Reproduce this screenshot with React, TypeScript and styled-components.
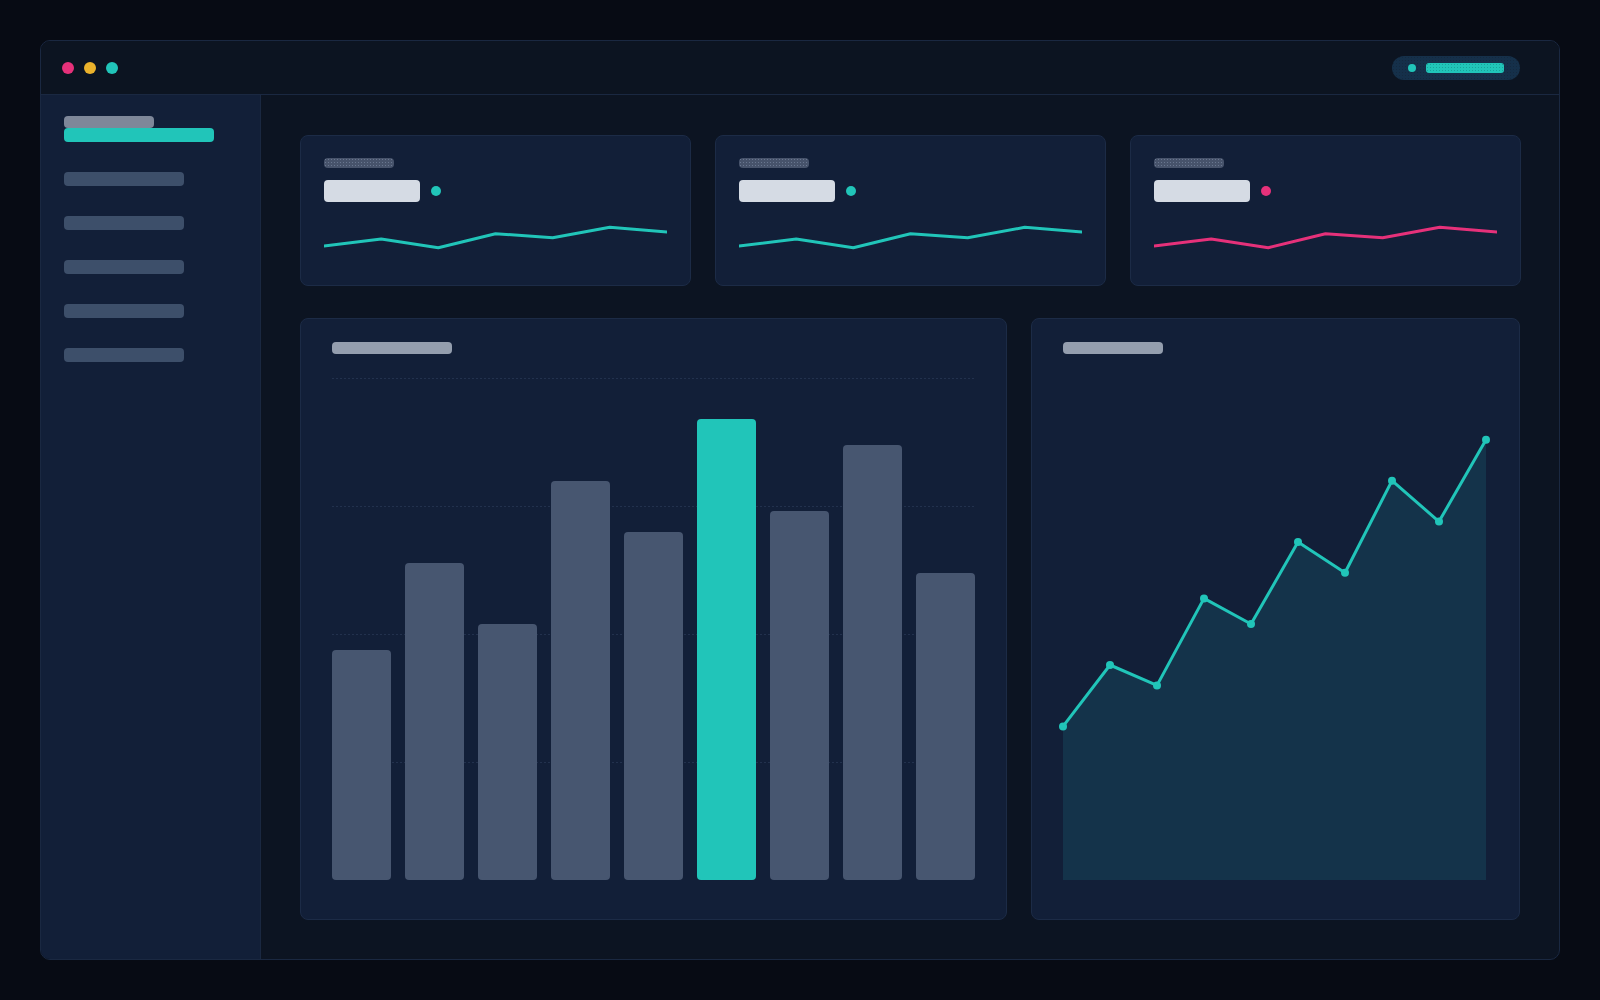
import styled, { createGlobalStyle, css } from "styled-components";

const GlobalStyle = createGlobalStyle`
  html, body {
    margin: 0;
    padding: 0;
    background: #070b14;
    font-family: "Inter", "Liberation Sans", sans-serif;
  }
  * {
    box-sizing: border-box;
  }
`;

const teal = "#21c5b9";
const pink = "#e6317a";
const yellow = "#ebb22c";

// faint speckle used by the placeholder pills
const speckle = (dot: string) => css`
  background-image: radial-gradient(${dot} 0.6px, transparent 0.8px);
  background-size: 3px 3px;
`;

const sparkPoints = [32, 25, 33.7, 19.7, 23.7, 13.3, 18];
const bars = [45, 62, 50, 78, 68, 90, 72, 85, 60];
const highlightBar = 5;
const trend = [30, 42, 38, 55, 50, 66, 60, 78, 70, 86];

const stats = [
  { line: teal, dot: teal },
  { line: teal, dot: teal },
  { line: pink, dot: pink },
];

export default function App() {
  const sparkPath = sparkPoints
    .map((y, i) => `${((i * 343) / 6).toFixed(1)},${y}`)
    .join(" ");

  const plotW = 424;
  const plotH = 512;
  const trendPts = trend.map((v, i) => [i * 47, plotH * (1 - v / 100)]);
  const trendLine = trendPts.map(([x, y]) => `${x},${y.toFixed(1)}`).join(" ");
  const trendArea = `0,${plotH} ${trendLine} ${trendPts[trendPts.length - 1][0]},${plotH}`;

  return (
    <>
      <GlobalStyle />
      <Page>
        <Window>
          <TitleBar>
            <Lights>
              <Light $color={pink} />
              <Light $color={yellow} />
              <Light $color={teal} />
            </Lights>
            <StatusPill>
              <StatusDot />
              <StatusBar />
            </StatusPill>
          </TitleBar>

          <Body>
            <Sidebar>
              <Brand>
                <BrandLabel />
                <BrandActive />
              </Brand>
              <NavList>
                {[0, 1, 2, 3, 4].map((i) => (
                  <NavItem key={i} />
                ))}
              </NavList>
            </Sidebar>

            <Main>
              <StatsRow>
                {stats.map((s, i) => (
                  <StatCard key={i}>
                    <StatLabel />
                    <ValueRow>
                      <ValueBox />
                      <TrendDot $color={s.dot} />
                    </ValueRow>
                    <svg width="343" height="40" viewBox="0 0 343 40">
                      <polyline
                        points={sparkPath}
                        fill="none"
                        stroke={s.line}
                        strokeWidth="3"
                        strokeLinejoin="round"
                        strokeLinecap="round"
                      />
                    </svg>
                  </StatCard>
                ))}
              </StatsRow>

              <ChartsRow>
                <ChartCard>
                  <ChartTitle $width={120} />
                  <Plot>
                    {[10, 138, 266, 394].map((top) => (
                      <GridLine key={top} style={{ top }} />
                    ))}
                    <Bars>
                      {bars.map((h, i) => (
                        <Bar
                          key={i}
                          $active={i === highlightBar}
                          style={{ height: `${h}%` }}
                        />
                      ))}
                    </Bars>
                  </Plot>
                </ChartCard>

                <ChartCard>
                  <ChartTitle $width={100} />
                  <Plot>
                    <svg
                      width={plotW}
                      height={plotH}
                      viewBox={`0 0 ${plotW} ${plotH}`}
                      style={{ overflow: "visible", display: "block" }}
                    >
                      <polygon points={trendArea} fill="#14334a" />
                      <polyline
                        points={trendLine}
                        fill="none"
                        stroke={teal}
                        strokeWidth="3"
                        strokeLinejoin="round"
                      />
                      {trendPts.map(([x, y], i) => (
                        <circle key={i} cx={x} cy={y} r="4" fill={teal} />
                      ))}
                    </svg>
                  </Plot>
                </ChartCard>
              </ChartsRow>
            </Main>
          </Body>
        </Window>
      </Page>
    </>
  );
}

const Page = styled.div`
  width: 1600px;
  height: 1000px;
  padding: 40px;
`;

const Window = styled.div`
  width: 1520px;
  height: 920px;
  display: flex;
  flex-direction: column;
  background: #0c1422;
  border: 1px solid #1a2841;
  border-radius: 10px;
  overflow: hidden;
`;

const TitleBar = styled.div`
  height: 54px;
  flex-shrink: 0;
  display: flex;
  align-items: center;
  justify-content: space-between;
  padding: 0 39px 0 21px;
  background: #0c1421;
  border-bottom: 1px solid #1a2841;
`;

const Lights = styled.div`
  display: flex;
  gap: 10px;
`;

const Light = styled.span<{ $color: string }>`
  width: 12px;
  height: 12px;
  border-radius: 50%;
  background: ${({ $color }) => $color};
`;

const StatusPill = styled.div`
  width: 128px;
  height: 24px;
  border-radius: 12px;
  display: flex;
  align-items: center;
  gap: 10px;
  padding: 0 16px;
  background-color: #15304a;
  ${speckle("rgba(20, 40, 62, 0.9)")}
`;

const StatusDot = styled.span`
  width: 8px;
  height: 8px;
  border-radius: 50%;
  background: ${teal};
`;

const StatusBar = styled.span`
  width: 78px;
  height: 10px;
  border-radius: 3px;
  background-color: ${teal};
  ${speckle("rgba(24, 160, 150, 0.9)")}
`;

const Body = styled.div`
  flex: 1;
  display: flex;
  min-height: 0;
`;

const Sidebar = styled.aside`
  width: 220px;
  flex-shrink: 0;
  background: #121f38;
  border-right: 1px solid #1a2841;
  padding: 21px 23px;
  display: flex;
  flex-direction: column;
  gap: 30px;
`;

const Brand = styled.div`
  display: flex;
  flex-direction: column;
`;

const BrandLabel = styled.span`
  width: 90px;
  height: 12px;
  border-radius: 4px;
  background: #7e8799;
`;

const BrandActive = styled.span`
  width: 150px;
  height: 14px;
  border-radius: 4px;
  background: ${teal};
`;

const NavList = styled.nav`
  display: flex;
  flex-direction: column;
  gap: 30px;
`;

const NavItem = styled.span`
  width: 120px;
  height: 14px;
  border-radius: 4px;
  background-color: #3d4f6a;
`;

const Main = styled.main`
  flex: 1;
  min-width: 0;
  padding: 40px 39px 39px;
  display: flex;
  flex-direction: column;
  gap: 32px;
`;

const StatsRow = styled.div`
  display: grid;
  grid-template-columns: repeat(3, 1fr);
  gap: 24px;
`;

const StatCard = styled.div`
  height: 151px;
  background: #121f38;
  border: 1px solid #1c2b46;
  border-radius: 8px;
  padding: 22px 23px 31px;
  display: flex;
  flex-direction: column;
  gap: 12px;
`;

const StatLabel = styled.span`
  width: 70px;
  height: 10px;
  border-radius: 4px;
  background-color: #47536b;
  ${speckle("rgba(120, 134, 160, 0.7)")}
`;

const ValueRow = styled.div`
  display: flex;
  align-items: center;
  gap: 11px;
  height: 22px;
`;

const ValueBox = styled.span`
  width: 96px;
  height: 22px;
  border-radius: 4px;
  background: #d5dbe4;
`;

const TrendDot = styled.span<{ $color: string }>`
  width: 10px;
  height: 10px;
  border-radius: 50%;
  background: ${({ $color }) => $color};
`;

const ChartsRow = styled.div`
  flex: 1;
  min-height: 0;
  display: grid;
  grid-template-columns: 707px 1fr;
  gap: 24px;
`;

const ChartCard = styled.section`
  background: #121f38;
  border: 1px solid #1c2b46;
  border-radius: 8px;
  padding: 23px 31px 39px;
  display: flex;
  flex-direction: column;
  gap: 14px;
  min-height: 0;
`;

const ChartTitle = styled.span<{ $width: number }>`
  width: ${({ $width }) => $width}px;
  height: 12px;
  border-radius: 4px;
  background: #949eae;
`;

const Plot = styled.div`
  position: relative;
  flex: 1;
  min-height: 0;
`;

const GridLine = styled.div`
  position: absolute;
  left: 0;
  right: 0;
  height: 1px;
  background-image: repeating-linear-gradient(
    to right,
    #22314d 0 2px,
    transparent 2px 4px
  );
`;

const Bars = styled.div`
  position: relative;
  height: 100%;
  display: flex;
  align-items: flex-end;
  justify-content: space-between;
`;

const Bar = styled.div<{ $active?: boolean }>`
  width: 59px;
  border-radius: 4px;
  background: ${({ $active }) => ($active ? teal : "#475670")};
`;
